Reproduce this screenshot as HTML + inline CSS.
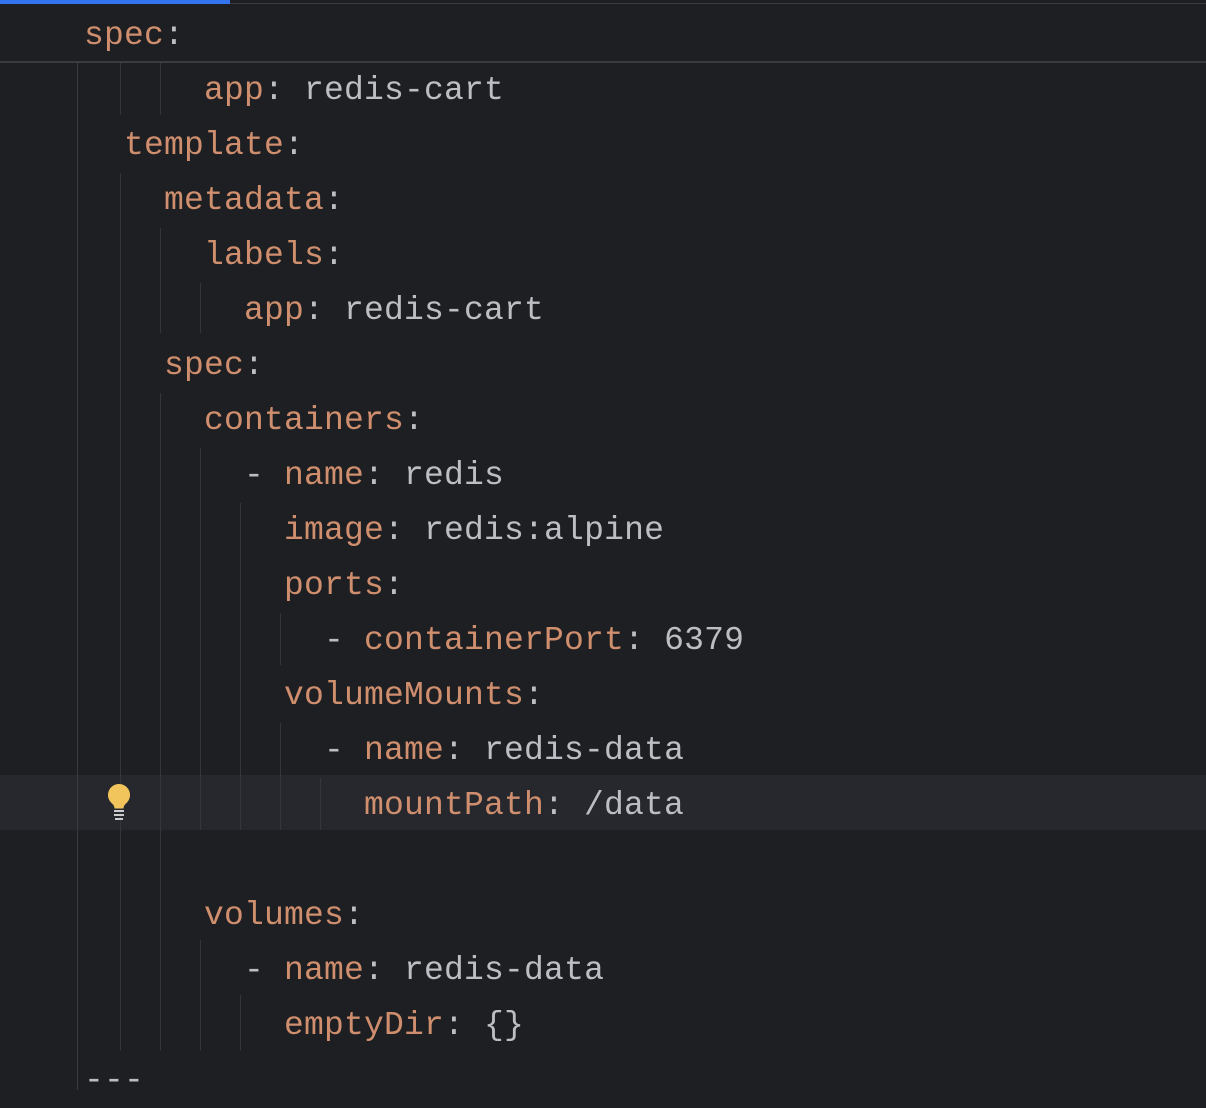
<!DOCTYPE html>
<html><head><meta charset="utf-8"><style>
html,body{margin:0;padding:0;}
body{width:1206px;height:1090px;background:#1e1f22;position:relative;overflow:hidden;font-family:"Liberation Mono",monospace;font-size:33px;letter-spacing:0.2px;}
.row{position:absolute;left:0;height:55px;line-height:55px;white-space:pre;color:#bcbec4;}
.k{color:#cf8e6d}
.g{position:absolute;width:1px;background:#34363b;}
</style></head><body>
<div style="position:absolute;left:0;top:0;width:230px;height:4px;background:#3574f0"></div>
<div style="position:absolute;left:230px;top:3px;width:976px;height:1px;background:#393b40"></div>
<div style="position:absolute;left:0;top:775px;width:1206px;height:55px;background:#26282e"></div>
<div class="g" style="left:77px;top:62px;height:1028px;background:#393b40"></div>
<!-- guides -->
<div class="g" style="left:120px;top:63px;height:52px"></div>
<div class="g" style="left:160px;top:63px;height:52px"></div>
<div class="g" style="left:120px;top:173px;height:877px"></div>
<div class="g" style="left:160px;top:228px;height:105px"></div>
<div class="g" style="left:200px;top:283px;height:50px"></div>
<div class="g" style="left:160px;top:393px;height:657px"></div>
<div class="g" style="left:200px;top:448px;height:382px"></div>
<div class="g" style="left:240px;top:503px;height:327px"></div>
<div class="g" style="left:280px;top:613px;height:52px"></div>
<div class="g" style="left:280px;top:723px;height:107px"></div>
<div class="g" style="left:320px;top:778px;height:52px"></div>
<div class="g" style="left:200px;top:940px;height:110px"></div>
<div class="g" style="left:240px;top:995px;height:55px"></div>
<div style="position:absolute;left:0;top:8px;width:1206px;height:53px;background:#1e1f22"></div>
<div style="position:absolute;left:0;top:61px;width:1206px;height:2px;background:#393b40"></div>
<div class="row" style="top:8px;left:84px"><span class="k">spec</span>:</div>
<div class="row" style="top:63px;left:204px"><span class="k">app</span>: redis-cart</div>
<div class="row" style="top:118px;left:124px"><span class="k">template</span>:</div>
<div class="row" style="top:173px;left:164px"><span class="k">metadata</span>:</div>
<div class="row" style="top:228px;left:204px"><span class="k">labels</span>:</div>
<div class="row" style="top:283px;left:244px"><span class="k">app</span>: redis-cart</div>
<div class="row" style="top:338px;left:164px"><span class="k">spec</span>:</div>
<div class="row" style="top:393px;left:204px"><span class="k">containers</span>:</div>
<div class="row" style="top:448px;left:244px">- <span class="k">name</span>: redis</div>
<div class="row" style="top:503px;left:284px"><span class="k">image</span>: redis:alpine</div>
<div class="row" style="top:558px;left:284px"><span class="k">ports</span>:</div>
<div class="row" style="top:613px;left:324px">- <span class="k">containerPort</span>: 6379</div>
<div class="row" style="top:668px;left:284px"><span class="k">volumeMounts</span>:</div>
<div class="row" style="top:723px;left:324px">- <span class="k">name</span>: redis-data</div>
<div class="row" style="top:778px;left:364px"><span class="k">mountPath</span>: /data</div>
<div class="row" style="top:888px;left:204px"><span class="k">volumes</span>:</div>
<div class="row" style="top:943px;left:244px">- <span class="k">name</span>: redis-data</div>
<div class="row" style="top:998px;left:284px"><span class="k">emptyDir</span>: {}</div>
<div class="row" style="top:1053px;left:84px">---</div>
<svg style="position:absolute;left:104px;top:782px" width="30" height="40" viewBox="0 0 30 40">
<path d="M15 2a11 11 0 0 0-7 19.5c1.5 1.3 2.5 3 2.5 5h9c0-2 1-3.7 2.5-5A11 11 0 0 0 15 2z" fill="#f2c55c"/>
<rect x="10" y="28" width="10" height="2" fill="#ccc"/><rect x="10" y="32" width="10" height="2" fill="#ccc"/><rect x="11" y="36" width="8" height="2" fill="#ccc"/>
</svg>
</body></html>
